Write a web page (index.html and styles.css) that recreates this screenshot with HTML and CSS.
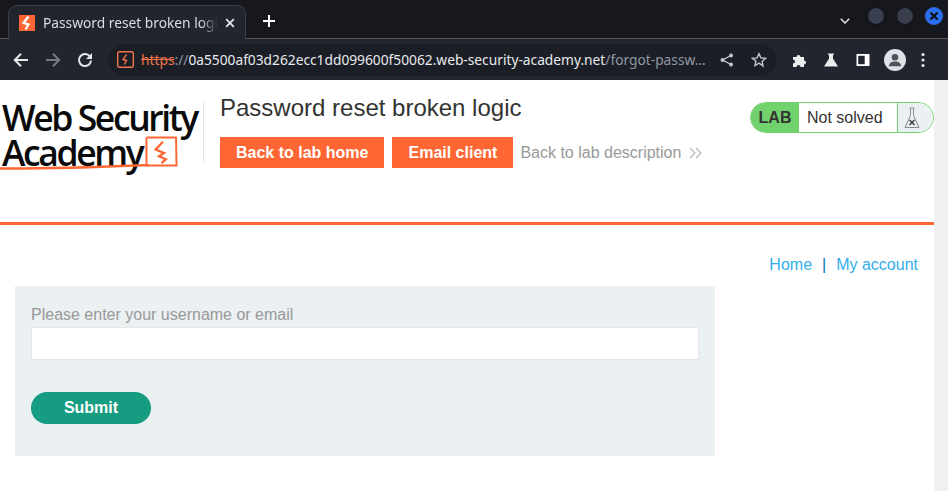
FILE: index.html
```html
<!DOCTYPE html>
<html lang="en">
<head>
<meta charset="utf-8">
<title>Password reset broken logic</title>
<link rel="stylesheet" href="styles.css">
</head>
<body>
<div class="chrome">
  <div class="tabstrip">
    <div class="tab">
      <svg class="favicon" viewBox="0 0 16 16"><rect width="16" height="16" fill="#ff6633"/><path d="M9.500 1.500 4.500 8l5 1.500L6.500 14.500" fill="none" stroke="#fff" stroke-width="2.200"/></svg>
      <span class="tab-title">Password reset broken logic</span>
      <svg class="tab-close" viewBox="0 0 10 10"><path d="M1.200 1.200l7.600 7.600M8.800 1.200l-7.600 7.600" stroke="#e4e5e8" stroke-width="1.800"/></svg>
    </div>
    <svg class="newtab" viewBox="0 0 12 12"><path d="M6 0v12M0 6h12" stroke="#fff" stroke-width="2"/></svg>
    <div class="strip-right">
      <svg class="chev" viewBox="0 0 10 6"><path d="M.8.800 5 5l4.200-4.200" fill="none" stroke="#e4e5e8" stroke-width="1.500"/></svg>
      <span class="winbtn"></span>
      <span class="winbtn"></span>
      <span class="winbtn winclose"><svg viewBox="0 0 10 10"><path d="M1.500 1.500l7 7M8.500 1.500l-7 7" stroke="#10131a" stroke-width="2.200"/></svg></span>
    </div>
  </div>
  <div class="toolbar">
    <svg class="tool nav" viewBox="0 0 16 16"><path d="M15 8H2M8 1.800 1.800 8 8 14.200" fill="none" stroke="#e6e7ea" stroke-width="2"/></svg>
    <svg class="tool nav" viewBox="0 0 16 16"><path d="M1 8h13M8 1.800 14.200 8 8 14.200" fill="none" stroke="#787a80" stroke-width="2"/></svg>
    <svg class="tool nav" viewBox="0 0 16 16"><path d="M13.300 5.200A6 6 0 1 0 14 8.500" fill="none" stroke="#e6e7ea" stroke-width="2"/><path d="M15 1v6H9z" fill="#e6e7ea"/></svg>
    <div class="omnibox">
      <svg class="site-icon" viewBox="0 0 17 17"><rect x=".7" y=".7" width="15.600" height="15.600" rx="1.500" fill="none" stroke="#f0744a" stroke-width="1.400"/><path d="M9.500 3.500 6 8.500l3.500 1L7.500 13.500" fill="none" stroke="#f0744a" stroke-width="1.400"/></svg>
      <span class="url"><s class="scheme">https</s><span class="dim">://</span><span class="host">0a5500af03d262ecc1dd099600f50062.web-security-academy.net</span><span class="dim">/forgot-passw…</span></span>
      <svg class="omni-act" viewBox="0 0 14 14"><circle cx="11" cy="2.500" r="2" fill="#c4c6cb"/><circle cx="11" cy="11.500" r="2" fill="#c4c6cb"/><circle cx="2.500" cy="7" r="2" fill="#c4c6cb"/><path d="M11 2.500 2.500 7l8.500 4.500" fill="none" stroke="#c4c6cb" stroke-width="1.300"/></svg>
      <svg class="omni-act star" viewBox="0 0 16 16"><path d="M8 1.700l1.900 4.200 4.600.5-3.400 3.100.9 4.500L8 11.200l-4 2.300.9-4.500L1.500 6.400l4.600-.5z" fill="none" stroke="#c4c6cb" stroke-width="1.400"/></svg>
    </div>
    <div class="extensions">
      <svg class="tool" viewBox="0 0 16 16"><path d="M1 5h3.500a2 2 0 1 1 4 0H12v3.500a2 2 0 1 1 0 4V15H8.500a2 2 0 1 0-4 0H1v-3.500a2 2 0 1 0 0-4z" fill="#eceded"/></svg>
      <svg class="tool" viewBox="0 0 16 16"><path d="M5 1.500h6v1.200H10v4L15 14.500H1L6 6.700v-4H5z" fill="#eceded"/></svg>
      <svg class="tool" viewBox="0 0 16 16"><path d="M1.500 2h13v12h-13z" fill="#fff"/><path d="M3.200 3.800h6.500v8.400H3.200z" fill="#23252e"/></svg>
      <svg class="avatar" viewBox="0 0 22 22"><circle cx="11" cy="11" r="11" fill="#dfe1e6"/><circle cx="11" cy="8.300" r="3.300" fill="#50535b"/><path d="M4.800 17.200c.4-3.600 3-4.700 6.200-4.700s5.800 1.100 6.200 4.700z" fill="#50535b"/></svg>
      <svg class="tool kebab" viewBox="0 0 4 16"><circle cx="2" cy="2.500" r="1.600" fill="#e6e7ea"/><circle cx="2" cy="8" r="1.600" fill="#e6e7ea"/><circle cx="2" cy="13.500" r="1.600" fill="#e6e7ea"/></svg>
    </div>
  </div>
</div>
<div class="viewport">
  <div class="page">
    <header class="lab-header">
      <div class="logo">
        <span class="logo-line">Web Security</span>
        <span class="logo-line second"><span>Academy</span>
          <svg class="logo-mark" viewBox="0 0 34 32"><path d="M1.500 1.500h30.500L32.500 30.500H1.500V1.500" fill="none" stroke="#ff6633" stroke-width="2"/><path d="M18.500 6l-7.500 8 8.500 3.500-5 3.500 7 3-4.500 4" fill="none" stroke="#ff6633" stroke-width="2.400"/></svg>
        </span>
        <svg class="logo-swoosh" viewBox="0 0 150 6" preserveAspectRatio="none"><path d="M0 4.500C50 5 100 3 149 1" fill="none" stroke="#ff6633" stroke-width="2.500"/></svg>
      </div>
      <div class="lab-info">
        <h1 class="lab-title">Password reset broken logic</h1>
        <div class="lab-actions">
          <a class="btn-orange">Back to lab home</a>
          <a class="btn-orange">Email client</a>
          <a class="back-link">Back to lab description
            <svg class="double-chev" viewBox="0 0 13 12"><path d="M1 1l5 5-5 5M7 1l5 5-5 5" fill="none" stroke="#b3b3b3" stroke-width="1.100"/></svg>
          </a>
        </div>
      </div>
      <div class="status">
        <span class="status-lab">LAB</span>
        <span class="status-text">Not solved</span>
        <span class="status-icon"><svg viewBox="0 0 18 24"><path d="M6.500 2h5M7.500 2.500v7L2 21.500h14L10.500 9.500v-7" fill="none" stroke="#8a8a8a" stroke-width="1"/><path d="M6.500 14l5 5M11.500 14l-5 5" stroke="#333" stroke-width="1.300"/></svg></span>
      </div>
    </header>
    <nav class="site-nav">
      <a class="nav-link">Home</a>
      <span class="nav-sep">|</span>
      <a class="nav-link">My account</a>
    </nav>
    <form class="panel">
      <label class="field-label" for="who">Please enter your username or email</label>
      <input class="field-input" id="who" type="text">
      <button class="submit" type="button">Submit</button>
    </form>
  </div>
  <div class="scrollbar"></div>
</div>
</body>
</html>
```
FILE: styles.css
```css
* { box-sizing: border-box; }
html, body { margin: 0; height: 100%; overflow: hidden; }
body { width: 948px; height: 491px; display: flex; flex-direction: column; background: #fff; font-family: "Liberation Sans", Arial, sans-serif; }
a { text-decoration: none; }

.chrome { height: 80px; flex: none; font-family: "Noto Sans", "Open Sans", sans-serif; }
.tabstrip { height: 39px; background: #17181e; display: flex; align-items: flex-end; padding-left: 8px; border-bottom: 1px solid #55575d; }
.tab { width: 238px; height: 34px; margin-bottom: -1px; background: #23252e; border: 1px solid #3c3e45; border-bottom: 0; border-radius: 9px 9px 0 0; display: flex; align-items: center; padding: 0 10px; }
.favicon { width: 16px; height: 16px; flex: none; }
.tab-title { width: 175px; margin-left: 8px; color: #dcdde0; font-size: 13.750px; white-space: nowrap; overflow: hidden; -webkit-mask-image: linear-gradient(to right, #000 90%, transparent); mask-image: linear-gradient(to right, #000 90%, transparent); }
.tab-close { width: 10px; height: 10px; margin-left: 7px; flex: none; }
.newtab { width: 12px; height: 12px; margin: 0 0 11px 17px; flex: none; }
.strip-right { margin-left: auto; height: 32px; align-self: flex-start; display: flex; align-items: center; padding-right: 5px; }
.chev { width: 10px; height: 6px; margin: 10px 17px 0 0; }
.winbtn { width: 18px; height: 18px; border-radius: 50%; background: #3a3f50; border: 1px solid #0e0f13; margin-left: 11px; display: flex; align-items: center; justify-content: center; }
.chev + .winbtn { margin-left: 0; }
.winclose { background: #2a6ff0; border: 0; }
.winclose svg { width: 10px; height: 10px; }

.toolbar { height: 41px; background: #23252e; display: flex; align-items: center; padding-left: 13px; }
.tool { width: 16px; height: 16px; flex: none; }
.nav { margin-right: 16px; }
.omnibox { width: 668px; height: 32px; margin-left: -1px; background: #1c1e26; border-radius: 16px; display: flex; align-items: center; padding-left: 9px; }
.site-icon { width: 17px; height: 17px; flex: none; }
.url { width: 567px; margin-left: 7px; font-size: 13.750px; white-space: nowrap; overflow: hidden; flex: none; }
.scheme { color: #f0744a; }
.dim { color: #8f98a5; }
.host { color: #e8eaed; }
.omni-act { width: 14px; height: 14px; margin-left: 12px; flex: none; }
.star { width: 16px; height: 16px; margin-left: 17px; }
.extensions { display: flex; align-items: center; gap: 16px; margin-left: 16px; }
.extensions .tool:nth-child(2) { margin-left: -1px; }
.avatar { width: 22px; height: 22px; margin-left: -3px; flex: none; }
.extensions .kebab { width: 4px; margin-left: -1px; }

.viewport { flex: 1; display: flex; min-height: 0; }
.page { width: 934px; flex: none; }
.scrollbar { flex: 1; background: #f1f1f1; }

.lab-header { position: relative; height: 145px; border-bottom: 3px solid #ff6633; display: flex; align-items: flex-start; }
.logo { width: 204px; height: 62px; margin-top: 21px; border-right: 1px solid #e6e6e6; position: relative; color: #0a0a0a; font-family: "Open Sans", sans-serif; flex: none; }
.logo-line { display: block; font-size: 35.500px; font-weight: 600; line-height: 32px; letter-spacing: -2.400px; white-space: nowrap; padding-left: 2px; }
.logo-line.second { margin-top: 3px; display: flex; align-items: flex-start; gap: 3px; }
.logo-mark { width: 33px; height: 31px; flex: none; margin-top: 0; }
.logo-swoosh { position: absolute; left: 0; top: 63px; width: 150px; height: 6px; }
.lab-info { margin-left: 16px; padding-top: 13px; }
.lab-title { margin: 0; font-size: 24px; font-weight: 400; line-height: 30px; color: #333332; }
.lab-actions { margin-top: 14px; display: flex; align-items: center; }
.btn-orange { height: 31px; padding: 0 16px; margin-right: 8px; background: #ff6633; color: #fff; font-size: 16px; font-weight: 700; line-height: 31px; }
.btn-orange + .btn-orange { margin-right: 7px; }
.back-link { color: #999; font-size: 16px; display: flex; align-items: center; gap: 8px; }
.double-chev { width: 13px; height: 12px; }
.status { position: absolute; left: 750px; top: 22px; width: 184px; height: 31px; display: flex; border: 1px solid #70d16d; border-radius: 16px; overflow: hidden; }
.status-lab { width: 48px; background: #70d16d; color: #333332; font-size: 16px; font-weight: 700; line-height: 30px; text-align: center; }
.status-text { width: 98px; background: #fff; color: #333332; font-size: 16px; line-height: 29px; padding-left: 8px; }
.status-icon { flex: 1; background: #ebf0f2; border-left: 1px solid #70d16d; display: flex; align-items: center; padding-left: 5px; }
.status-icon svg { width: 18px; height: 24px; }

.site-nav { height: 61px; padding: 31px 16px 0 0; display: flex; justify-content: flex-end; font-size: 16px; line-height: 18px; }
.nav-link { color: #33aeea; }
.nav-sep { color: #0071bc; margin: 0 10px; }
.panel { margin-left: 15px; width: 700px; height: 170px; background: #ebf0f2; padding: 20px 16px 0; display: flex; flex-direction: column; align-items: flex-start; }
.field-label { color: #999; font-size: 16px; line-height: 18px; height: 21px; }
.field-input { width: 668px; height: 33px; border: 1px solid #e6e6e6; background: #fff; padding: 0; margin: 0; outline: 0; }
.submit { margin-top: 32px; width: 120px; height: 32px; border: 0; border-radius: 16px; background: #169c80; color: #fff; font-family: inherit; font-size: 16px; font-weight: 700; padding: 0; }
```
